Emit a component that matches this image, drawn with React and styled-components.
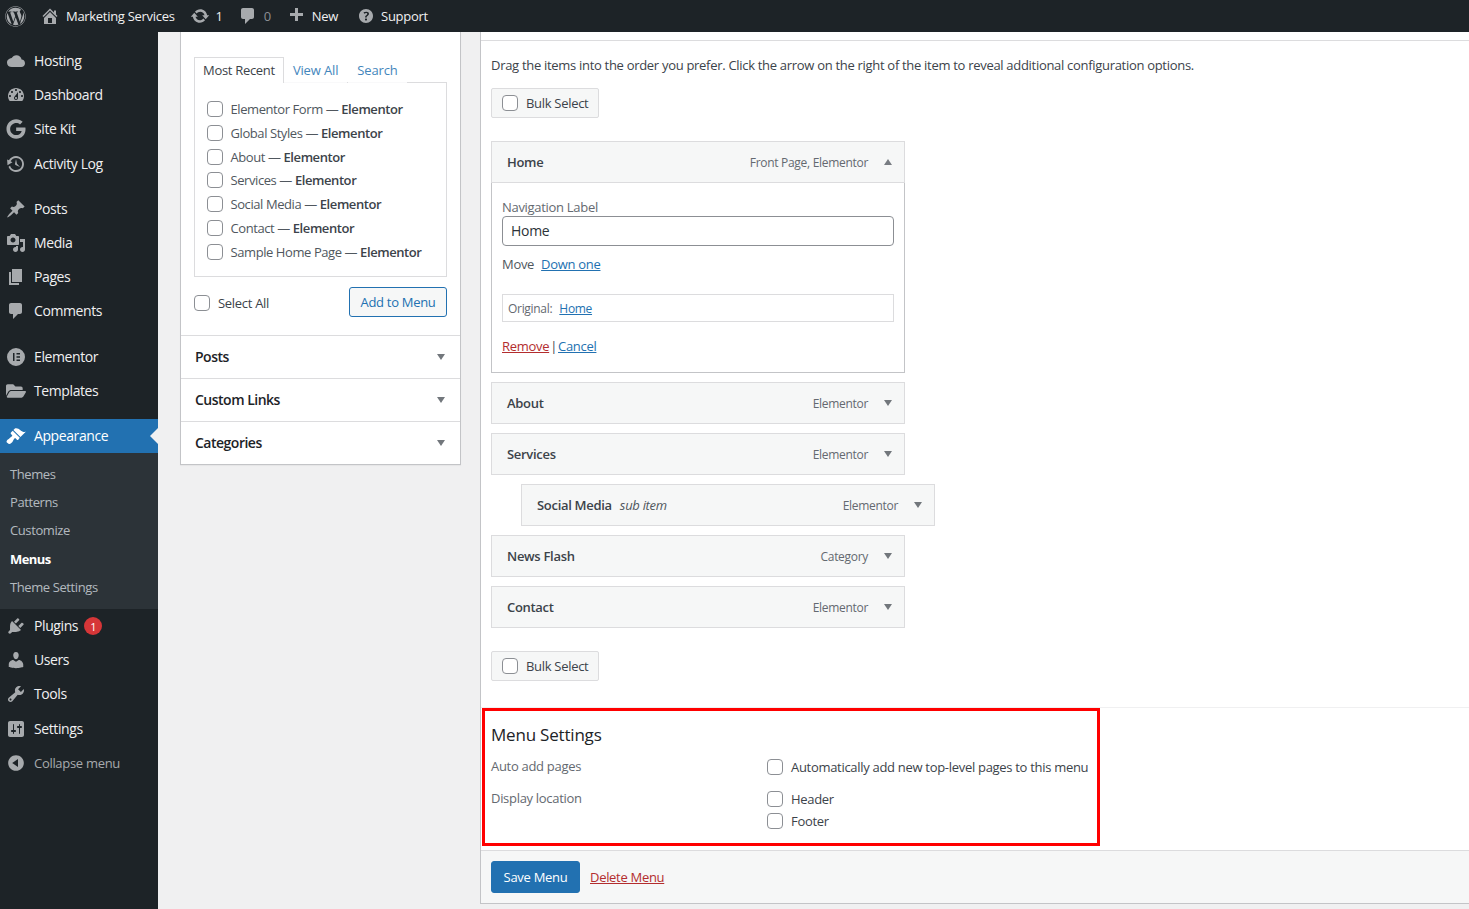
import React from 'react';
import styled, { createGlobalStyle } from 'styled-components';
import { FaWordpress, FaGoogle, FaFolderOpen } from 'react-icons/fa';

const GlobalStyle = createGlobalStyle`
    html, body {
        margin: 0;
        padding: 0;
        height: 909px;
        overflow: hidden;
        background: #f0f0f1;
        font-family: "Open Sans", "Noto Sans", "Liberation Sans", sans-serif;
        font-size: 13px;
        letter-spacing: -0.3px;
        color: #3c434a;
    }
    * { box-sizing: border-box; }
`;

const paths = {
    home: 'M16 8.5l1.53 1.53-1.06 1.06L10 4.62l-6.47 6.47-1.06-1.06L10 2.5l4 4v-2h2v4zm-6-2.46l6 5.99V18H4v-5.97zM12 17v-5H8v5h4z',
    update: 'M10.2 3.28c3.53 0 6.43 2.61 6.92 6h2.08l-3.5 4-3.5-4h2.32c-.45-1.97-2.21-3.45-4.32-3.45-1.45 0-2.73.71-3.54 1.78L4.95 5.66C6.23 4.2 8.11 3.28 10.2 3.28zm-.4 13.44c-3.52 0-6.43-2.61-6.92-6H.8l3.5-4c1.17 1.33 2.33 2.67 3.5 4H5.48c.45 1.97 2.21 3.45 4.32 3.45 1.45 0 2.73-.71 3.54-1.78l1.71 1.95c-1.28 1.46-3.15 2.38-5.25 2.38z',
    comment: 'M5 2h9c1.1 0 2 .9 2 2v7c0 1.1-.9 2-2 2h-2l-5 5v-5H5c-1.1 0-2-.9-2-2V4c0-1.1.9-2 2-2z',
    plus: 'M17 7v3h-5v5H9v-5H4V7h5V2h3v5h5z',
    help: 'M17 10c0-3.87-3.14-7-7-7-3.87 0-7 3.13-7 7s3.13 7 7 7c3.86 0 7-3.13 7-7zm-6.3 1.48H9.14v-.43c0-.38.08-.7.24-.98s.46-.57.88-.89c.41-.29.68-.53.81-.71.14-.18.2-.39.2-.62 0-.25-.09-.44-.28-.58-.19-.13-.45-.19-.79-.19-.58 0-1.25.19-2 .57l-.64-1.28c.87-.49 1.8-.74 2.77-.74.81 0 1.45.2 1.92.58.48.39.71.91.71 1.55 0 .43-.09.8-.29 1.11-.19.32-.57.67-1.11 1.06-.38.28-.61.49-.71.63-.1.15-.15.34-.15.57v.35zm-1.47 2.74c-.18-.17-.27-.42-.27-.73 0-.33.08-.58.26-.75s.43-.25.77-.25c.32 0 .57.09.75.26s.27.42.27.74c0 .3-.09.55-.27.72-.18.18-.43.27-.75.27-.33 0-.58-.09-.76-.26z',
    cloud: 'M15.6 8.6C15.2 6 13 4.2 10.4 4.2c-2 0-3.800 1.100-4.700 2.900C3.300 7.300 1 9.200 1 11.700c0 2.700 2.200 4.300 4.800 4.300h9.500c2.100 0 3.700-1.700 3.700-3.800 0-2-1.500-3.500-3.400-3.600z',
    dashboard: 'M3.76 16h12.48c1.1-1.37 1.76-3.11 1.76-5 0-4.42-3.58-8-8-8s-8 3.58-8 8c0 1.89.66 3.63 1.76 5zM10 4c.55 0 1 .45 1 1s-.45 1-1 1-1-.45-1-1 .45-1 1-1zM6 6c.55 0 1 .45 1 1s-.45 1-1 1-1-.45-1-1 .45-1 1-1zm8 0c.55 0 1 .45 1 1s-.45 1-1 1-1-.45-1-1 .45-1 1-1zm-5.37 5.55L12 7v6c0 1.1-.9 2-2 2s-2-.9-2-2c0-.57.24-1.08.63-1.45zM4 10c.55 0 1 .45 1 1s-.45 1-1 1-1-.45-1-1 .45-1 1-1zm12 0c.55 0 1 .45 1 1s-.45 1-1 1-1-.45-1-1 .45-1 1-1zm-5 3c0-.55-.45-1-1-1s-1 .45-1 1 .45 1 1 1 1-.45 1-1z',
    backup: 'M13.65 2.88c3.93 2.01 5.48 6.84 3.47 10.77s-6.83 5.48-10.77 3.47c-1.87-.96-3.2-2.56-3.86-4.4l1.64-1.03c.45 1.57 1.52 2.95 3.08 3.76 3.01 1.54 6.69.35 8.23-2.66 1.55-3.01.36-6.69-2.65-8.24C9.78 3.01 6.1 4.2 4.56 7.21l1.88.97-4.95 3.08-.39-5.82 1.78.91C4.9 2.4 9.75.89 13.65 2.88zm-4.36 7.83C9.11 10.53 9 10.28 9 10c0-.07.03-.12.04-.19h-.01L10 5l.97 4.81L14 13l-4.5-2.12.02-.02c-.08-.04-.16-.09-.23-.15z',
    post: 'M10.44 3.02l1.82-1.82 6.36 6.35-1.83 1.82c-1.05-.68-2.48-.57-3.41.36l-.75.75c-.92.93-1.04 2.35-.35 3.41l-1.83 1.82-2.41-2.41-2.8 2.79c-.42.42-3.38 2.71-3.8 2.29s1.86-3.39 2.28-3.81l2.79-2.79L4.1 9.36l1.83-1.82c1.05.69 2.48.57 3.4-.36l.75-.75c.93-.92 1.05-2.35.36-3.41z',
    media: 'M13 11V4c0-.55-.45-1-1-1h-1.67L9 1H5L3.67 3H2c-.55 0-1 .45-1 1v7c0 .55.45 1 1 1h10c.55 0 1-.45 1-1zM7 4.5c1.38 0 2.5 1.12 2.5 2.5S8.38 9.5 7 9.5 4.5 8.38 4.5 7 5.62 4.5 7 4.5zM14 6h5v10.5c0 1.38-1.12 2.5-2.5 2.5S14 17.88 14 16.5s1.12-2.5 2.5-2.5c.17 0 .34.02.5.05V9h-3V6zm-4 8.05V13h2v3.5c0 1.38-1.12 2.5-2.5 2.5S7 17.88 7 16.5 8.12 14 9.5 14c.17 0 .34.02.5.05z',
    pages: 'M6 15V2h10v13H6zm-1 1h8v2H3V5h2v11z',
    elementor: 'M10 1a9 9 0 1 0 0 18 9 9 0 0 0 0-18zM7 6h1.500v8H7V6zm3.500 0H14v1.500h-3.500V6zm0 3.250H14v1.500h-3.500v-1.500zm0 3.250H14V14h-3.500v-1.500z',
    appearance: 'M14.48 11.06L7.41 3.99l1.5-1.5c.5-.56 2.3-.47 3.51.32 1.21.8 1.43 1.28 2.91 2.1 1.18.64 2.45 1.26 4.45.85zm-.71.71L6.7 4.7 4.93 6.47c-.39.39-.39 1.02 0 1.41l1.06 1.06c.39.39.39 1.03 0 1.42-.6.6-1.43 1.11-2.21 1.69-.35.26-.7.53-1.01.84C1.43 13.23.4 14.98.5 15.78c.1.79 1.83 2.09 2.88 2.19.99.1 2.79-1.49 3.45-2.75.48-.92.89-1.93 1.58-2.62.39-.39 1.03-.39 1.42 0l1.06 1.06c.39.39 1.02.39 1.41 0z',
    plugins: 'M13.11 4.36L9.87 7.6 8 5.73l3.24-3.24c.35-.34 1.05-.2 1.56.32.52.51.66 1.21.31 1.55zm-8 1.77l.91-1.12 9.01 9.01-1.19.84c-.71.71-2.63 1.16-3.82 1.16H6.14L4.9 17.26c-.59.59-1.54.59-2.12 0-.59-.58-.59-1.53 0-2.12l1.24-1.24v-3.88c0-1.13.4-3.19 1.09-3.89zm7.26 3.97l3.24-3.24c.34-.35 1.04-.21 1.55.31.52.51.66 1.21.31 1.55l-3.24 3.25z',
    users: 'M10 9.25c-2.27 0-2.73-3.44-2.73-3.44C7 4.02 7.82 2 9.97 2c2.16 0 2.98 2.02 2.71 3.81 0 0-.41 3.44-2.68 3.44zm0 2.57L12.72 10c2.39 0 4.52 2.33 4.52 4.53v2.49s-3.65 1.13-7.24 1.13c-3.65 0-7.24-1.13-7.24-1.13v-2.49c0-2.25 1.94-4.48 4.47-4.48z',
    tools: 'M16.68 9.77c-1.34 1.34-3.3 1.67-4.95.99l-5.41 6.52c-.99.99-2.59.99-3.58 0s-.99-2.59 0-3.57l6.52-5.42c-.68-1.65-.35-3.61.99-4.95 1.28-1.28 3.12-1.62 4.72-1.06l-2.89 2.89 2.82 2.82 2.86-2.87c.53 1.58.18 3.39-1.08 4.65zM3.81 16.21c.4.39 1.04.39 1.43 0 .4-.4.4-1.04 0-1.43-.39-.4-1.03-.4-1.43 0-.39.39-.39 1.03 0 1.43z',
    settings: 'M18 16V4c0-1.1-.9-2-2-2H4c-1.1 0-2 .9-2 2v12c0 1.1.9 2 2 2h12c1.1 0 2-.9 2-2zM8 11h1c.55 0 1 .45 1 1s-.45 1-1 1H8v1.5c0 .28-.22.5-.5.5s-.5-.22-.5-.5V13H6c-.55 0-1-.45-1-1s.45-1 1-1h1V5.5c0-.28.22-.5.5-.5s.5.22.5.5V11zm5-2h-1c-.55 0-1-.45-1-1s.45-1 1-1h1V5.5c0-.28.22-.5.5-.5s.5.22.5.5V7h1c.55 0 1 .45 1 1s-.45 1-1 1h-1v5.5c0 .28-.22.5-.5.5s-.5-.22-.5-.5V9z',
    collapse: 'M10 2.16c4.33 0 7.84 3.51 7.84 7.84s-3.51 7.84-7.84 7.84S2.16 14.33 2.16 10 5.71 2.16 10 2.16zm2 11.72V6.12L6.18 9.97z',
};

const Icon = ({ name, size = 20 }) => (
    <svg width={ size } height={ size } viewBox='0 0 20 20' fill='currentColor'>
        <path fillRule='evenodd' d={ paths[name] } />
    </svg>
);

const Page = styled.div`
    width: 1469px;
    height: 909px;
    display: flex;
    flex-direction: column;
    overflow: hidden;
`;

const AdminBar = styled.header`
    height: 32px;
    flex: none;
    background: #1d2327;
    display: flex;
    align-items: center;
    color: #f0f0f1;
    font-size: 13px;
`;

const BarItem = styled.div`
    display: flex;
    align-items: center;
    height: 32px;
    gap: ${ p => p.$gap || 6 }px;
    margin-left: ${ p => p.$left || 0 }px;
    color: #f0f0f1;
    white-space: nowrap;

    svg { color: #a7aaad; flex: none; }
`;

const Muted = styled.span`
    color: #8c8f94;
`;

const Body = styled.div`
    flex: 1;
    display: flex;
    min-height: 0;
`;

const Sidebar = styled.nav`
    width: 158px;
    flex: none;
    background: #1d2327;
    padding-top: 12px;
    font-size: 14px;
    letter-spacing: -0.4px;
`;

const MenuItem = styled.div`
    height: ${ p => p.$tall ? 35 : 34 }px;
    margin-top: ${ p => p.$sep || 0 }px;
    padding-bottom: ${ p => p.$tall || p.$dim ? 0 : 2 }px;
    display: flex;
    align-items: center;
    gap: 8px;
    padding-left: 6px;
    position: relative;
    color: ${ p => p.$dim ? '#a7aaad' : '#f0f0f1' };
    background: ${ p => p.$active ? '#2271b1' : 'transparent' };

    svg {
        color: ${ p => p.$active ? '#fff' : '#a7aaad' };
        flex: none;
        margin-top: ${ p => p.$tall || p.$dim ? 0 : 2 }px;
    }
    ${ p => p.$active && `
        color: #fff;
        &::after {
            content: '';
            position: absolute;
            right: 0;
            top: 9px;
            border: 8px solid transparent;
            border-right-color: #f0f0f1;
            border-left-width: 0;
        }
    ` }
`;

const CollapseLabel = styled.span`
    font-size: 13px;
    letter-spacing: -0.3px;
`;

const SubMenu = styled.div`
    background: #2c3338;
    padding-top: 7px;
    height: 156px;
`;

const SubItem = styled.div`
    height: ${ p => p.$current ? 29 : 28 }px;
    display: flex;
    align-items: center;
    padding-left: 10px;
    font-size: 13px;
    letter-spacing: ${ p => p.$current ? -0.6 : -0.4 }px;
    color: ${ p => p.$current ? '#fff' : 'rgba(240, 246, 252, 0.7)' };
    font-weight: ${ p => p.$current ? 700 : 400 };
`;

const Badge = styled.span`
    width: 18px;
    height: 18px;
    border-radius: 50%;
    background: #d63638;
    color: #fff;
    font-size: 11px;
    display: flex;
    align-items: center;
    justify-content: center;
    margin-left: -2px;
    margin-top: 2px;
`;

const Content = styled.main`
    flex: 1;
    min-width: 0;
    display: flex;
    align-items: flex-start;
    padding-left: 22px;
    gap: 19px;
`;

const LeftPanel = styled.aside`
    width: 281px;
    flex: none;
    background: #fff;
    border: 1px solid #c3c4c7;
    border-top: none;
    box-shadow: 0 1px 1px rgba(0, 0, 0, 0.04);
`;

const PagesBox = styled.div`
    padding: 25px 13px 18px;
`;

const Tabs = styled.div`
    display: flex;
    align-items: flex-end;
    height: 26px;
    position: relative;
    z-index: 1;
`;

const Tab = styled.div`
    height: 26px;
    display: flex;
    align-items: center;
    padding: 0 ${ p => p.$active ? 8 : 9 }px ${ p => p.$active ? 2 : 0 }px;
    margin-left: ${ p => p.$wide ? 1 : 0 }px;
    letter-spacing: ${ p => p.$active ? -0.3 : -0.15 }px;
    color: ${ p => p.$active ? '#3c434a' : '#2271b1' };
    opacity: ${ p => p.$active ? 1 : 0.85 };
    background: #fff;
    border: ${ p => p.$active ? '1px solid #dcdcde' : 'none' };
    border-bottom: none;
`;

const TabPanel = styled.div`
    height: 195px;
    margin-top: -1px;
    border: 1px solid #dcdcde;
    padding: 14.2px 12px 0;
    display: flex;
    flex-direction: column;
    letter-spacing: -0.42px;
`;

const CheckRow = styled.label`
    display: flex;
    align-items: center;
    gap: ${ p => p.$gap || 8 }px;
    height: ${ p => p.$height || 23.8 }px;
    white-space: nowrap;
`;

const CheckBox = styled.span`
    width: 16px;
    height: 16px;
    flex: none;
    display: block;
    background: #fff;
    border: 1px solid #8c8f94;
    border-radius: 4px;
`;

const PageKind = styled.span`
    color: #3c434a;
    font-weight: 600;
`;

const PageName = styled.span`
    color: #50575e;
`;

const ActionRow = styled.div`
    display: flex;
    align-items: center;
    justify-content: space-between;
    margin-top: 10px;
    height: 30px;
`;

const SelectAll = styled.div`
    padding-top: 2px;
`;

const AddButton = styled.button`
    width: 98px;
    height: 30px;
    padding: 0;
    font: inherit;
    letter-spacing: inherit;
    color: #2271b1;
    background: #f6f7f7;
    border: 1px solid #2271b1;
    border-radius: 3px;
`;

const AccordionRow = styled.div`
    height: 43px;
    border-top: 1px solid #dcdcde;
    padding: 0 15px 2px 14px;
    display: flex;
    align-items: center;
    justify-content: space-between;
    font-size: 14px;
    font-weight: 600;
    letter-spacing: -0.5px;
    color: #1d2327;

    span { margin-top: 2px; }
`;

const Arrow = styled.span`
    width: 0;
    height: 0;
    display: block;
    flex: none;
    border-left: 4px solid transparent;
    border-right: 4px solid transparent;
    ${ p => p.$up ? 'border-bottom: 6px solid #787c82;' : 'border-top: 6px solid #72777c;' }
`;

const RightPanel = styled.section`
    flex: 1;
    min-width: 0;
    height: 872px;
    background: #fff;
    border: 1px solid #c3c4c7;
    border-top: none;
    border-right: none;
    display: flex;
    flex-direction: column;
`;

const TopStrip = styled.div`
    height: 9px;
    flex: none;
    border-bottom: 1px solid #dcdcde;
`;

const EditArea = styled.div`
    height: 667px;
    flex: none;
    padding: 0 10px;
    border-bottom: 1px solid #f0f0f1;
`;

const Intro = styled.p`
    margin: 15px 0 13px;
    line-height: 19px;
    white-space: nowrap;
`;

const BulkBox = styled.div`
    width: 108px;
    height: 30px;
    margin-top: ${ p => p.$top || 0 }px;
    margin-bottom: ${ p => p.$bottom || 0 }px;
    display: flex;
    align-items: center;
    gap: 8px;
    padding-left: 10px;
    background: #f6f7f7;
    border: 1px solid #dcdcde;
    border-radius: 2px;
`;

const ItemBar = styled.div`
    width: 414px;
    height: 42px;
    margin-left: ${ p => p.$indent || 0 }px;
    margin-bottom: ${ p => p.$open ? 0 : 9 }px;
    background: #f6f7f7;
    border: 1px solid #dcdcde;
    display: flex;
    align-items: center;
    padding: 0 12px 0 15px;
    color: #1d2327;
`;

const ItemTitle = styled.span`
    font-weight: 600;
    color: #3c434a;
    flex: 1;
`;

const SubLabel = styled.em`
    font-weight: 400;
    margin-left: 8px;
    font-size: 13px;
    color: #50575e;
`;

const ItemType = styled.span`
    font-size: 12px;
    color: #646970;
    margin-right: 16px;
`;

const ItemBody = styled.div`
    width: 414px;
    height: 190px;
    margin-bottom: 9px;
    border: 1px solid #c3c4c7;
    border-top: none;
    padding: 15px 10px 0;
    display: flex;
    flex-direction: column;
`;

const FieldLabel = styled.div`
    line-height: 18px;
    color: #646970;
`;

const TextInput = styled.div`
    height: 30px;
    border: 1px solid #8c8f94;
    border-radius: 4px;
    padding: 0 8px 2px;
    display: flex;
    align-items: center;
    font-size: 14px;
    color: #2c3338;
`;

const MoveRow = styled.div`
    margin-top: 9px;
    line-height: 19px;
    display: flex;
    gap: 7px;
    color: #50575e;
`;

const TextLink = styled.a`
    color: ${ p => p.$danger ? '#b32d2e' : '#2271b1' };
    text-decoration: underline;
    cursor: pointer;
`;

const OriginalBox = styled.div`
    height: 28px;
    margin-top: 20px;
    border: 1px solid #dcdcde;
    padding: 0 5px;
    display: flex;
    align-items: center;
    gap: 7px;
    font-size: 12px;
    color: #646970;
`;

const ActionLinks = styled.div`
    margin-top: 15px;
    line-height: 19px;
    display: flex;
    gap: 1px;
    color: #3c434a;
`;

const SettingsBox = styled.div`
    width: 618px;
    height: 138px;
    margin-left: 1px;
    flex: none;
    border: 3px solid #f00;
    padding: 12px 6px 0;
`;

const SettingsTitle = styled.h3`
    margin: 0 0 9px;
    font-size: 17px;
    font-weight: 400;
    line-height: 24px;
    letter-spacing: -0.2px;
    color: #1d2327;
`;

const SettingsGrid = styled.div`
    display: grid;
    grid-template-columns: 276px 1fr;
`;

const SettingsLabel = styled.div`
    line-height: 20px;
    color: #646970;
`;

const SettingsOptions = styled.div`
    display: flex;
    flex-direction: column;
    margin-bottom: ${ p => p.$space || 0 }px;
`;

const Footer = styled.footer`
    margin-top: 4px;
    flex: 1;
    background: #f6f7f7;
    border-top: 1px solid #dcdcde;
    display: flex;
    align-items: center;
    gap: 10px;
    padding: 0 10px;
`;

const SaveButton = styled.button`
    width: 89px;
    height: 32px;
    padding: 0;
    font: inherit;
    letter-spacing: inherit;
    color: #fff;
    background: #2271b1;
    border: 1px solid #2271b1;
    border-radius: 3px;
`;

const sideTop = [
    [ { icon: 'cloud', label: 'Hosting' }, { icon: 'dashboard', label: 'Dashboard' }, { g: true, label: 'Site Kit' }, { icon: 'backup', label: 'Activity Log', tall: true } ],
    [ { icon: 'post', label: 'Posts' }, { icon: 'media', label: 'Media' }, { icon: 'pages', label: 'Pages' }, { icon: 'comment', label: 'Comments' } ],
    [ { icon: 'elementor', label: 'Elementor' }, { folder: true, label: 'Templates' } ],
];
const groupGaps = [ 0, 11, 12 ];

const subItems = [ 'Themes', 'Patterns', 'Customize', 'Menus', 'Theme Settings' ];

const recentPages = [ 'Elementor Form', 'Global Styles', 'About', 'Services', 'Social Media', 'Contact', 'Sample Home Page' ];

const menuItems = [
    { title: 'About', type: 'Elementor' },
    { title: 'Services', type: 'Elementor' },
    { title: 'Social Media', type: 'Elementor', sub: true },
    { title: 'News Flash', type: 'Category' },
    { title: 'Contact', type: 'Elementor' },
];

const App = () => {
    return (
        <Page>
            <GlobalStyle />
            <AdminBar>
                <BarItem $left={ 5 }><FaWordpress size={ 21 } color='#a7aaad' /></BarItem>
                <BarItem $left={ 14 } $gap={ 6 }><Icon name='home' />Marketing Services</BarItem>
                <BarItem $left={ 15 } $gap={ 6 }><Icon name='update' />1</BarItem>
                <BarItem $left={ 15 } $gap={ 6 }><Icon name='comment' /><Muted>0</Muted></BarItem>
                <BarItem $left={ 15 } $gap={ 6 }><Icon name='plus' />New</BarItem>
                <BarItem $left={ 18 } $gap={ 5 }><Icon name='help' />Support</BarItem>
            </AdminBar>
            <Body>
                <Sidebar>
                    { sideTop.map( ( group, i ) => group.map( ( item, j ) => (
                        <MenuItem key={ item.label } $sep={ j === 0 ? groupGaps[i] : 0 } $tall={ item.tall }>
                            { item.g ? <FaGoogle size={ 20 } /> : item.folder ? <FaFolderOpen size={ 20 } /> : <Icon name={ item.icon } /> }
                            { item.label }
                        </MenuItem>
                    ) ) ) }
                    <MenuItem $sep={ 11 } $active><Icon name='appearance' />Appearance</MenuItem>
                    <SubMenu>
                        { subItems.map( s => <SubItem key={ s } $current={ s === 'Menus' }>{ s }</SubItem> ) }
                    </SubMenu>
                    <MenuItem><Icon name='plugins' />Plugins<Badge>1</Badge></MenuItem>
                    <MenuItem><Icon name='users' />Users</MenuItem>
                    <MenuItem><Icon name='tools' />Tools</MenuItem>
                    <MenuItem $tall><Icon name='settings' />Settings</MenuItem>
                    <MenuItem $dim><Icon name='collapse' /><CollapseLabel>Collapse menu</CollapseLabel></MenuItem>
                </Sidebar>
                <Content>
                    <LeftPanel>
                        <PagesBox>
                            <Tabs>
                                <Tab $active>Most Recent</Tab>
                                <Tab>View All</Tab>
                                <Tab $wide>Search</Tab>
                            </Tabs>
                            <TabPanel>
                                { recentPages.map( p => (
                                    <CheckRow key={ p } $gap={ 7.5 }>
                                        <CheckBox />
                                        <span><PageName>{ p } — </PageName><PageKind>Elementor</PageKind></span>
                                    </CheckRow>
                                ) ) }
                            </TabPanel>
                            <ActionRow>
                                <SelectAll><CheckRow><CheckBox />Select All</CheckRow></SelectAll>
                                <AddButton>Add to Menu</AddButton>
                            </ActionRow>
                        </PagesBox>
                        <AccordionRow>Posts<Arrow /></AccordionRow>
                        <AccordionRow>Custom Links<Arrow /></AccordionRow>
                        <AccordionRow>Categories<Arrow /></AccordionRow>
                    </LeftPanel>
                    <RightPanel>
                        <TopStrip />
                        <EditArea>
                            <Intro>Drag the items into the order you prefer. Click the arrow on the right of the item to reveal additional configuration options.</Intro>
                            <BulkBox $bottom={ 23 }><CheckBox />Bulk Select</BulkBox>
                            <ItemBar $open>
                                <ItemTitle>Home</ItemTitle>
                                <ItemType>Front Page, Elementor</ItemType>
                                <Arrow $up />
                            </ItemBar>
                            <ItemBody>
                                <FieldLabel>Navigation Label</FieldLabel>
                                <TextInput>Home</TextInput>
                                <MoveRow>Move <TextLink>Down one</TextLink></MoveRow>
                                <OriginalBox>Original: <TextLink>Home</TextLink></OriginalBox>
                                <ActionLinks><TextLink $danger>Remove</TextLink><span>|</span><TextLink>Cancel</TextLink></ActionLinks>
                            </ItemBody>
                            { menuItems.map( m => (
                                <ItemBar key={ m.title } $indent={ m.sub ? 30 : 0 }>
                                    <ItemTitle>{ m.title }{ m.sub && <SubLabel>sub item</SubLabel> }</ItemTitle>
                                    <ItemType>{ m.type }</ItemType>
                                    <Arrow />
                                </ItemBar>
                            ) ) }
                            <BulkBox $top={ 23 }><CheckBox />Bulk Select</BulkBox>
                        </EditArea>
                        <SettingsBox>
                            <SettingsTitle>Menu Settings</SettingsTitle>
                            <SettingsGrid>
                                <SettingsLabel>Auto add pages</SettingsLabel>
                                <SettingsOptions $space={ 10 }>
                                    <CheckRow $height={ 22 }><CheckBox />Automatically add new top-level pages to this menu</CheckRow>
                                </SettingsOptions>
                                <SettingsLabel>Display location</SettingsLabel>
                                <SettingsOptions>
                                    <CheckRow $height={ 22 }><CheckBox />Header</CheckRow>
                                    <CheckRow $height={ 22 }><CheckBox />Footer</CheckRow>
                                </SettingsOptions>
                            </SettingsGrid>
                        </SettingsBox>
                        <Footer>
                            <SaveButton>Save Menu</SaveButton>
                            <TextLink $danger>Delete Menu</TextLink>
                        </Footer>
                    </RightPanel>
                </Content>
            </Body>
        </Page>
    );
};

export default App;
